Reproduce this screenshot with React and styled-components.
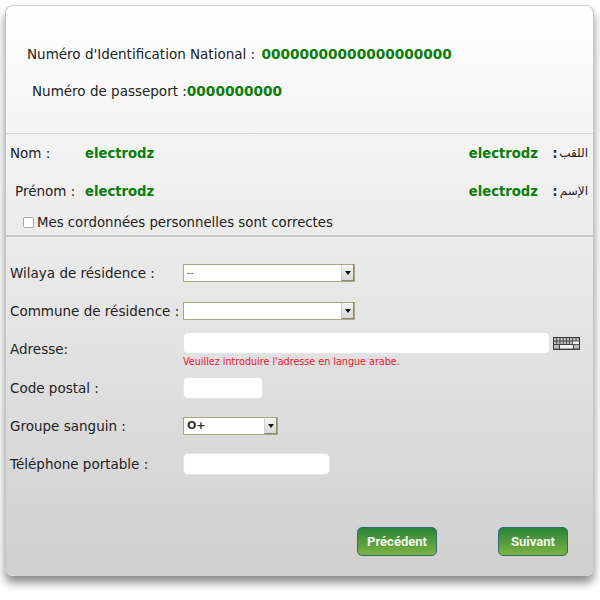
import React from 'react';
import styled, { createGlobalStyle } from 'styled-components';

const Global = createGlobalStyle`
  html, body { margin: 0; padding: 0; background: #fff; }
  body { font-family: "DejaVu Sans", Verdana, sans-serif; width: 600px; height: 600px; overflow: hidden; }
`;

const Panel = styled.form`
  box-sizing: border-box;
  width: 589px;
  height: 571px;
  margin: 5px 0 0 5px;
  border-radius: 8px;
  border: 1px solid #d2d2d2;
  border-left-color: #c4c4c4;
  border-right-color: #c4c4c4;
  background: linear-gradient(180deg, #ffffff 0%, #cfcfcf 100%);
  box-shadow: 0 7px 10px rgba(0, 0, 0, 0.45);
  color: #222;
  font-size: 13.5px;
  display: flex;
  flex-direction: column;
`;

const IdSection = styled.section`
  height: 128px;
  box-sizing: border-box;
  padding-top: 40px;
  border-bottom: 1px solid #d4d4d4;
  display: flex;
  flex-direction: column;
  gap: 21px;
`;

const IdRow = styled.div`
  padding-left: ${p => p.$indent}px;
  line-height: 16px;
  white-space: nowrap;
`;

const Value = styled.b`
  color: #0a7d0a;
  font-weight: bold;
  font-size: 13.7px;
`;

const NationalNumber = styled(Value)`
  margin-left: 2px;
`;

const NameValue = styled(Value)`
  font-size: 13.2px;
`;

const IdentitySection = styled.section`
  height: 103px;
  box-sizing: border-box;
  padding-top: 11px;
  border-bottom: 2px solid #c8c8c8;
`;

const IdentityRow = styled.div`
  display: grid;
  grid-template-columns: 79px 1fr auto 25px 25px;
  align-items: center;
  height: 16px;
  margin-bottom: 22px;
  padding-right: 5px;
  white-space: nowrap;
`;

const NameLabel = styled.span`
  padding-left: ${p => p.$indent}px;
`;

const Colon = styled.span`
  text-align: center;
  padding-left: 9px;
  font-weight: bold;
  color: #333;
`;

const ArabicLabel = styled.span`
  font-family: "DejaVu Sans", sans-serif;
  font-size: 12px;
  direction: rtl;
  text-align: right;
  color: #222;
`;

const ConfirmRow = styled.label`
  display: flex;
  align-items: center;
  margin-top: -7px;
  padding-left: 17px;
  height: 16px;
  font-size: 13.3px;
`;

const Checkbox = styled.input.attrs({ type: 'checkbox' })`
  appearance: none;
  box-sizing: border-box;
  width: 11px;
  height: 11px;
  margin: 1px 3px 0 0;
  background: #fff;
  border: 1px solid #a8a8a8;
  border-radius: 2px;
`;

const FormGrid = styled.div`
  display: grid;
  grid-template-columns: 177px 1fr;
  grid-auto-rows: 38.2px;
  padding-top: 17px;
  align-items: center;
`;

const FieldLabel = styled.label`
  padding-left: 4px;
  white-space: nowrap;
`;

const SelectBox = styled.div`
  position: relative;
  box-sizing: border-box;
  width: ${p => p.$width}px;
  height: 18px;
  background: #fff;
  border: 1px solid #a9a67e;
  font-size: ${p => (p.$bold ? 11 : 9.5)}px;
  font-weight: ${p => (p.$bold ? 'bold' : 'normal')};
  color: #333;
  line-height: 16px;
  padding-left: 3px;
`;

const SelectArrow = styled.span`
  position: absolute;
  top: 0;
  right: 0;
  bottom: 0;
  width: 13px;
  background: linear-gradient(180deg, #f4f4f4, #d8d8d8);
  border-left: 1px solid #d0d0d0;
  border-bottom: 1px solid #8a8a70;
  border-right: 1px solid #8a8a70;
  box-sizing: border-box;
  &::after {
    content: '';
    position: absolute;
    left: 3px;
    top: 6px;
    border-left: 3px solid transparent;
    border-right: 3px solid transparent;
    border-top: 4px solid #111;
  }
`;

const TextInput = styled.input.attrs({ type: 'text' })`
  display: block;
  box-sizing: border-box;
  width: ${p => p.$width}px;
  height: 22px;
  background: #fff;
  border: 1px solid #e4e4e4;
  border-radius: 5px;
  padding: 0 4px;
  outline: none;
`;

const AddressCell = styled.div`
  position: relative;
  display: flex;
  align-items: center;
  gap: 3px;
  align-self: start;
  margin-top: 2px;
`;

const Hint = styled.div`
  position: absolute;
  top: 23px;
  left: 0;
  font-size: 9.6px;
  line-height: 13px;
  color: #f0142f;
  white-space: nowrap;
`;

const Actions = styled.div`
  display: flex;
  justify-content: flex-end;
  gap: 61px;
  padding: 44px 25px 0 0;
`;

const Button = styled.button`
  box-sizing: border-box;
  width: ${p => p.$width}px;
  height: 29px;
  padding: 0;
  border: 1px solid #2f6a6e;
  border-radius: 5px;
  background: linear-gradient(180deg, #2a833a 0%, #7cb342 100%);
  color: #f2f8ea;
  font-family: Roboto, "Open Sans", sans-serif;
  font-size: 13px;
  font-weight: bold;
`;

const Keyboard = () => (
  <svg width="27" height="13" viewBox="0 0 27 13" aria-hidden="true">
    <rect width="27" height="13" fill="#3b3b3b" />
    {[1, 4.5, 8].map((y, r) =>
      Array.from({ length: r === 2 ? 3 : 8 }).map((_, i) => (
        <rect
          key={`${r}-${i}`}
          x={r === 2 ? [1, 7, 21][i] : 1 + i * 3.2}
          y={y}
          width={r === 2 ? [5, 13, 5][i] : 2.4}
          height={r === 2 ? 3.6 : 2.6}
          fill={r === 2 && i === 1 ? '#f2f2f2' : '#bdbdbd'}
        />
      ))
    )}
    <rect x="20" y="4.5" width="6" height="2.6" fill="#f2f2f2" />
  </svg>
);

const Select = ({ width, bold, value }) => (
  <SelectBox $width={width} $bold={bold}>
    {value}
    <SelectArrow />
  </SelectBox>
);

export default function App() {
  return (
    <>
      <Global />
      <Panel onSubmit={e => e.preventDefault()}>
        <IdSection>
          <IdRow $indent={21}>
            Numéro d'Identification National : <NationalNumber>00000000000000000000</NationalNumber>
          </IdRow>
          <IdRow $indent={26}>
            Numéro de passeport :<Value>0000000000</Value>
          </IdRow>
        </IdSection>
        <IdentitySection>
          <IdentityRow>
            <NameLabel $indent={4}>Nom :</NameLabel>
            <NameValue>electrodz</NameValue>
            <NameValue>electrodz</NameValue>
            <Colon>:</Colon>
            <ArabicLabel>اللقب</ArabicLabel>
          </IdentityRow>
          <IdentityRow>
            <NameLabel $indent={9}>Prénom :</NameLabel>
            <NameValue>electrodz</NameValue>
            <NameValue>electrodz</NameValue>
            <Colon>:</Colon>
            <ArabicLabel>الإسم</ArabicLabel>
          </IdentityRow>
          <ConfirmRow>
            <Checkbox />
            Mes cordonnées personnelles sont correctes
          </ConfirmRow>
        </IdentitySection>
        <FormGrid>
          <FieldLabel>Wilaya de résidence :</FieldLabel>
          <Select width={172} value="--" />
          <FieldLabel>Commune de résidence :</FieldLabel>
          <Select width={172} />
          <FieldLabel>Adresse:</FieldLabel>
          <AddressCell>
            <TextInput $width={367} />
            <Keyboard />
            <Hint>Veuillez introduire l'adresse en langue arabe.</Hint>
          </AddressCell>
          <FieldLabel>Code postal :</FieldLabel>
          <TextInput $width={80} />
          <FieldLabel>Groupe sanguin :</FieldLabel>
          <Select width={95} bold value="O+" />
          <FieldLabel>Téléphone portable :</FieldLabel>
          <TextInput $width={147} />
        </FormGrid>
        <Actions>
          <Button type="button" $width={80}>Précédent</Button>
          <Button type="button" $width={70}>Suivant</Button>
        </Actions>
      </Panel>
    </>
  );
}
